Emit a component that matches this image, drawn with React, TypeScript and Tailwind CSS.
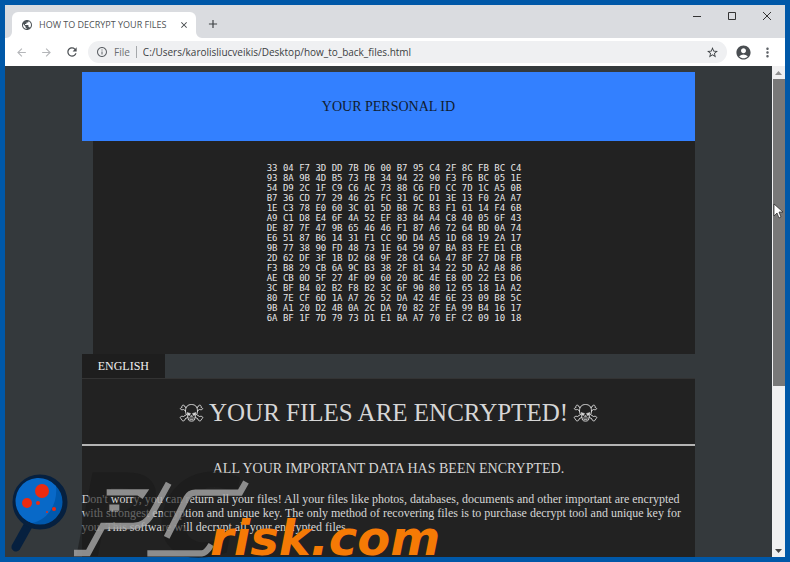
import {
  MdAccountCircle,
  MdAdd,
  MdArrowBack,
  MdArrowForward,
  MdClose,
  MdInfoOutline,
  MdMoreVert,
  MdPublic,
  MdRefresh,
  MdStarBorder,
} from "react-icons/md";

const PERSONAL_ID = `33 04 F7 3D DD 7B D6 00 B7 95 C4 2F 8C FB BC C4
93 8A 9B 4D B5 73 FB 34 94 22 90 F3 F6 BC 05 1E
54 D9 2C 1F C9 C6 AC 73 88 C6 FD CC 7D 1C A5 0B
B7 36 CD 77 29 46 25 FC 31 6C D1 3E 13 F0 2A A7
1E C3 78 E0 60 3C 01 5D B8 7C B3 F1 61 14 F4 6B
A9 C1 D8 E4 6F 4A 52 EF 83 84 A4 C8 40 05 6F 43
DE 87 7F 47 9B 65 46 46 F1 87 A6 72 64 BD 0A 74
E6 51 87 B6 14 31 F1 CC 9D D4 A5 1D 68 19 2A 17
9B 77 38 90 FD 48 73 1E 64 59 07 BA 83 FE E1 CB
2D 62 DF 3F 1B D2 68 9F 28 C4 6A 47 8F 27 D8 FB
F3 B8 29 CB 6A 9C B3 38 2F 81 34 22 5D A2 A8 86
AE CB 0D 5F 27 4F 09 60 20 8C 4E E8 0D 22 E3 D6
3C BF B4 02 B2 F8 B2 3C 6F 90 80 12 65 18 1A A2
80 7E CF 6D 1A A7 26 52 DA 42 4E 6E 23 09 B8 5C
9B A1 20 D2 4B 0A 2C DA 70 82 2F EA 99 B4 16 17
6A BF 1F 7D 79 73 D1 E1 BA A7 70 EF C2 09 10 18`;

function TabStrip() {
  return (
    <div className="flex h-[33px] shrink-0 justify-between bg-[#dadce0]">
      <div className="flex items-end pl-[7px]">
        <div className="relative flex h-[26px] w-[184px] items-center rounded-t-md bg-white pl-[9px] pr-[7px]">
          <svg className="absolute -left-[6px] bottom-0 size-[6px]" viewBox="0 0 6 6">
            <path d="M6 0v6H0a6 6 0 0 0 6-6z" fill="#fff" />
          </svg>
          <svg className="absolute -right-[6px] bottom-0 size-[6px]" viewBox="0 0 6 6">
            <path d="M0 0v6h6a6 6 0 0 1-6-6z" fill="#fff" />
          </svg>
          <MdPublic className="size-3 shrink-0 text-[#4d5357]" />
          <span className="ml-[6px] flex-1 whitespace-nowrap text-[9px] text-[#505356]">HOW TO DECRYPT YOUR FILES</span>
          <button type="button" aria-label="Close tab" className="text-[#3c4043]">
            <MdClose className="size-[10px]" />
          </button>
        </div>
        <button type="button" aria-label="New tab" className="mb-[7px] ml-[10px] text-[#3c4043]">
          <MdAdd className="size-[14px]" />
        </button>
      </div>
      <div className="flex items-start gap-[25px] pr-[13px] pt-[6px] text-[#333]">
        <button type="button" aria-label="Minimize">
          <svg className="size-[10px]" viewBox="0 0 10 10">
            <path d="M1 5.5h8" stroke="currentColor" />
          </svg>
        </button>
        <button type="button" aria-label="Maximize">
          <svg className="size-[10px]" viewBox="0 0 10 10">
            <path d="M1.5 1.5h7v7h-7z" fill="none" stroke="currentColor" />
          </svg>
        </button>
        <button type="button" aria-label="Close">
          <svg className="size-[10px]" viewBox="0 0 10 10">
            <path d="M1 1l8 8M9 1l-8 8" stroke="currentColor" />
          </svg>
        </button>
      </div>
    </div>
  );
}

function Toolbar() {
  return (
    <div className="flex h-7 shrink-0 items-center bg-white pl-[10px] pr-[10px]">
      <div className="flex items-center gap-3">
        <button type="button" aria-label="Back" className="text-[#b4b6b9]">
          <MdArrowBack className="size-[13px]" />
        </button>
        <button type="button" aria-label="Forward" className="text-[#b4b6b9]">
          <MdArrowForward className="size-[13px]" />
        </button>
        <button type="button" aria-label="Reload" className="text-[#4d5155]">
          <MdRefresh className="size-[14px]" />
        </button>
      </div>
      <div className="ml-[9px] flex h-[22px] flex-1 items-center rounded-full bg-[#eff0f2] pl-2 pr-2 text-[10px] text-[#3c4043]">
        <MdInfoOutline className="size-[12px] text-[#5f6368]" />
        <label htmlFor="address" className="ml-[6px] text-[#6b6f73]">
          File
        </label>
        <span className="mx-[6px] h-3 w-px bg-[#a5a8ab]" />
        <input
          id="address"
          type="text"
          defaultValue="C:/Users/karolisliucveikis/Desktop/how_to_back_files.html"
          className="min-w-0 flex-1 bg-transparent outline-none"
        />
        <button type="button" aria-label="Bookmark">
          <MdStarBorder className="size-[13px]" />
        </button>
      </div>
      <button type="button" aria-label="Profile" className="ml-2 text-[#4a4e52]">
        <MdAccountCircle className="size-[17px]" />
      </button>
      <button type="button" aria-label="Menu" className="ml-2 text-[#5f6368]">
        <MdMoreVert className="size-[15px]" />
      </button>
    </div>
  );
}

function Skull() {
  return (
    <svg className="h-[18px] w-[25px]" viewBox="0 0 50 36" fill="#222" stroke="#d6d6d6" strokeWidth="2" strokeLinejoin="round">
      <path d="M6 7C4 1 12 1 12 6l29 19c6-2 9 3 4 5 0 5-7 5-7 0L9 11c-6 2-9-3-3-4z" />
      <path d="M44 7c2-6-6-6-6-1L9 25c-6-2-9 3-4 5 0 5 7 5 7 0l29-19c6 2 9-3 3-4z" />
      <path d="M13 14C13 5 18 1 25 1s12 4 12 13c0 4-1 7-4 9l-2 9c-2 3-10 3-12 0l-2-9c-3-2-4-5-4-9z" />
      <path d="M16 17l7 2-2 4-4-1zM34 17l-7 2 2 4 4-1z" fill="#d6d6d6" strokeWidth="1" />
      <path d="M25 22l-2 3h4zM20 28h10M21 31h8" strokeWidth="1.4" />
    </svg>
  );
}

function Note() {
  return (
    <main className="h-full min-w-0 flex-1 overflow-hidden bg-[#34393c] pt-[6px] font-['Liberation_Serif'] text-[#d6d6d6]">
      <div className="mx-auto w-4/5">
        <h2 className="bg-[#3380ff] py-6 text-center text-[14px] leading-[21px] text-[#101c30]">YOUR PERSONAL ID</h2>
        <pre className="ml-[11px] bg-[#222] pb-[31px] pt-[22px] text-center font-['DejaVu_Sans_Mono'] text-[9px] leading-[10px] text-[#e6e6e6]">
          {PERSONAL_ID}
        </pre>
        <button type="button" className="block h-6 bg-[#1e1e1e] px-4 text-[12px] text-[#f0f0f0]">
          ENGLISH
        </button>
        <section className="border-t border-[#333] bg-[#222] pb-20">
          <h1 className="flex items-center justify-center gap-[5px] border-b-2 border-[#b4b4b4] pb-[15px] pt-[18px] text-[25px] leading-[32px]">
            <Skull />
            YOUR FILES ARE ENCRYPTED!
            <Skull />
          </h1>
          <h3 className="pt-[14px] text-center text-[14px] leading-[18px]">ALL YOUR IMPORTANT DATA HAS BEEN ENCRYPTED.</h3>
          <p className="pt-[14px] text-[12px] leading-[14px]">
            Don't worry, you can return all your files! All your files like photos, databases, documents and other important are encrypted
            with strongest encryption and unique key. The only method of recovering files is to purchase decrypt tool and unique key for
            you. This software will decrypt all your encrypted files.
          </p>
        </section>
      </div>
    </main>
  );
}

function ScrollBar() {
  return (
    <div className="flex w-[13px] shrink-0 flex-col bg-[#f0f0f1]">
      <div className="flex h-[13px] items-center justify-center">
        <svg className="h-[4px] w-[7px]" viewBox="0 0 7 4">
          <path d="M0 4L3.5 0 7 4z" fill="#909090" />
        </svg>
      </div>
      <div className="flex-1">
        <div className="ml-px h-[66%] bg-[#787878]" />
      </div>
      <div className="flex h-[13px] items-center justify-center">
        <svg className="h-[4px] w-[7px]" viewBox="0 0 7 4">
          <path d="M0 0l3.5 4L7 0z" fill="#444" />
        </svg>
      </div>
    </div>
  );
}

function Watermark() {
  return (
    <div className="pointer-events-none absolute bottom-0 left-0 h-[102px] w-[460px] font-['DejaVu_Sans'] font-bold italic leading-none">
      <svg className="absolute left-[10px] top-[12px] h-[82px] w-[60px]" viewBox="0 0 60 82">
        <path d="M20 50L6 75" stroke="#06203f" strokeWidth="9" strokeLinecap="round" />
        <circle cx="30" cy="30" r="25" fill="#0058ad" stroke="#06203f" strokeWidth="5" />
        <path d="M46 14A23 23 0 1 0 22 51C38 48 48 32 46 14z" fill="#0869c8" />
        <circle cx="32" cy="19" r="7" fill="#ec2a10" />
        <circle cx="17" cy="31" r="5" fill="#ec2a10" />
        <circle cx="28" cy="31" r="2" fill="#ec2a10" />
        <circle cx="44" cy="37" r="2" fill="#ec2a10" />
        <circle cx="37" cy="40" r="1" fill="#ec2a10" />
      </svg>
      <span className="absolute bottom-[-12px] left-[74px] text-[114px] text-[#1a1a1a] opacity-60">PC</span>
      {/* bevel highlights along the wordmark */}
      <svg className="absolute bottom-0 left-[70px] h-[96px] w-[190px]" viewBox="0 0 570 288" fill="none" stroke="#a8a8a8" strokeWidth="19" opacity="0.8">
        <path d="M110 79H220L210 94M118 125H148" />
        <path d="M296 52L246 142Q228 178 190 180H98L54 261H12" />
        <path d="M528 48L510 80H376Q358 80 350 96L290 214" />
        <path d="M232 262H396Q408 262 424 236" />
      </svg>
      <span className="absolute bottom-0 left-[210px] text-[48px] text-[#f57a05]">risk.com</span>
    </div>
  );
}

export default function App() {
  return (
    <div className="relative h-screen overflow-hidden bg-[#0058a8] p-[5px] font-['Open_Sans']">
      <div className="flex h-full flex-col">
        <TabStrip />
        <Toolbar />
        <div className="flex min-h-0 flex-1">
          <Note />
          <ScrollBar />
        </div>
      </div>
      <Watermark />
      <svg className="absolute right-[7px] top-[203px] h-[16px] w-[10px]" viewBox="0 0 10 16">
        <path d="M1 1v12l3-3 2 5 2-1-2-5h4z" fill="#fff" stroke="#222" strokeWidth=".7" />
      </svg>
    </div>
  );
}
